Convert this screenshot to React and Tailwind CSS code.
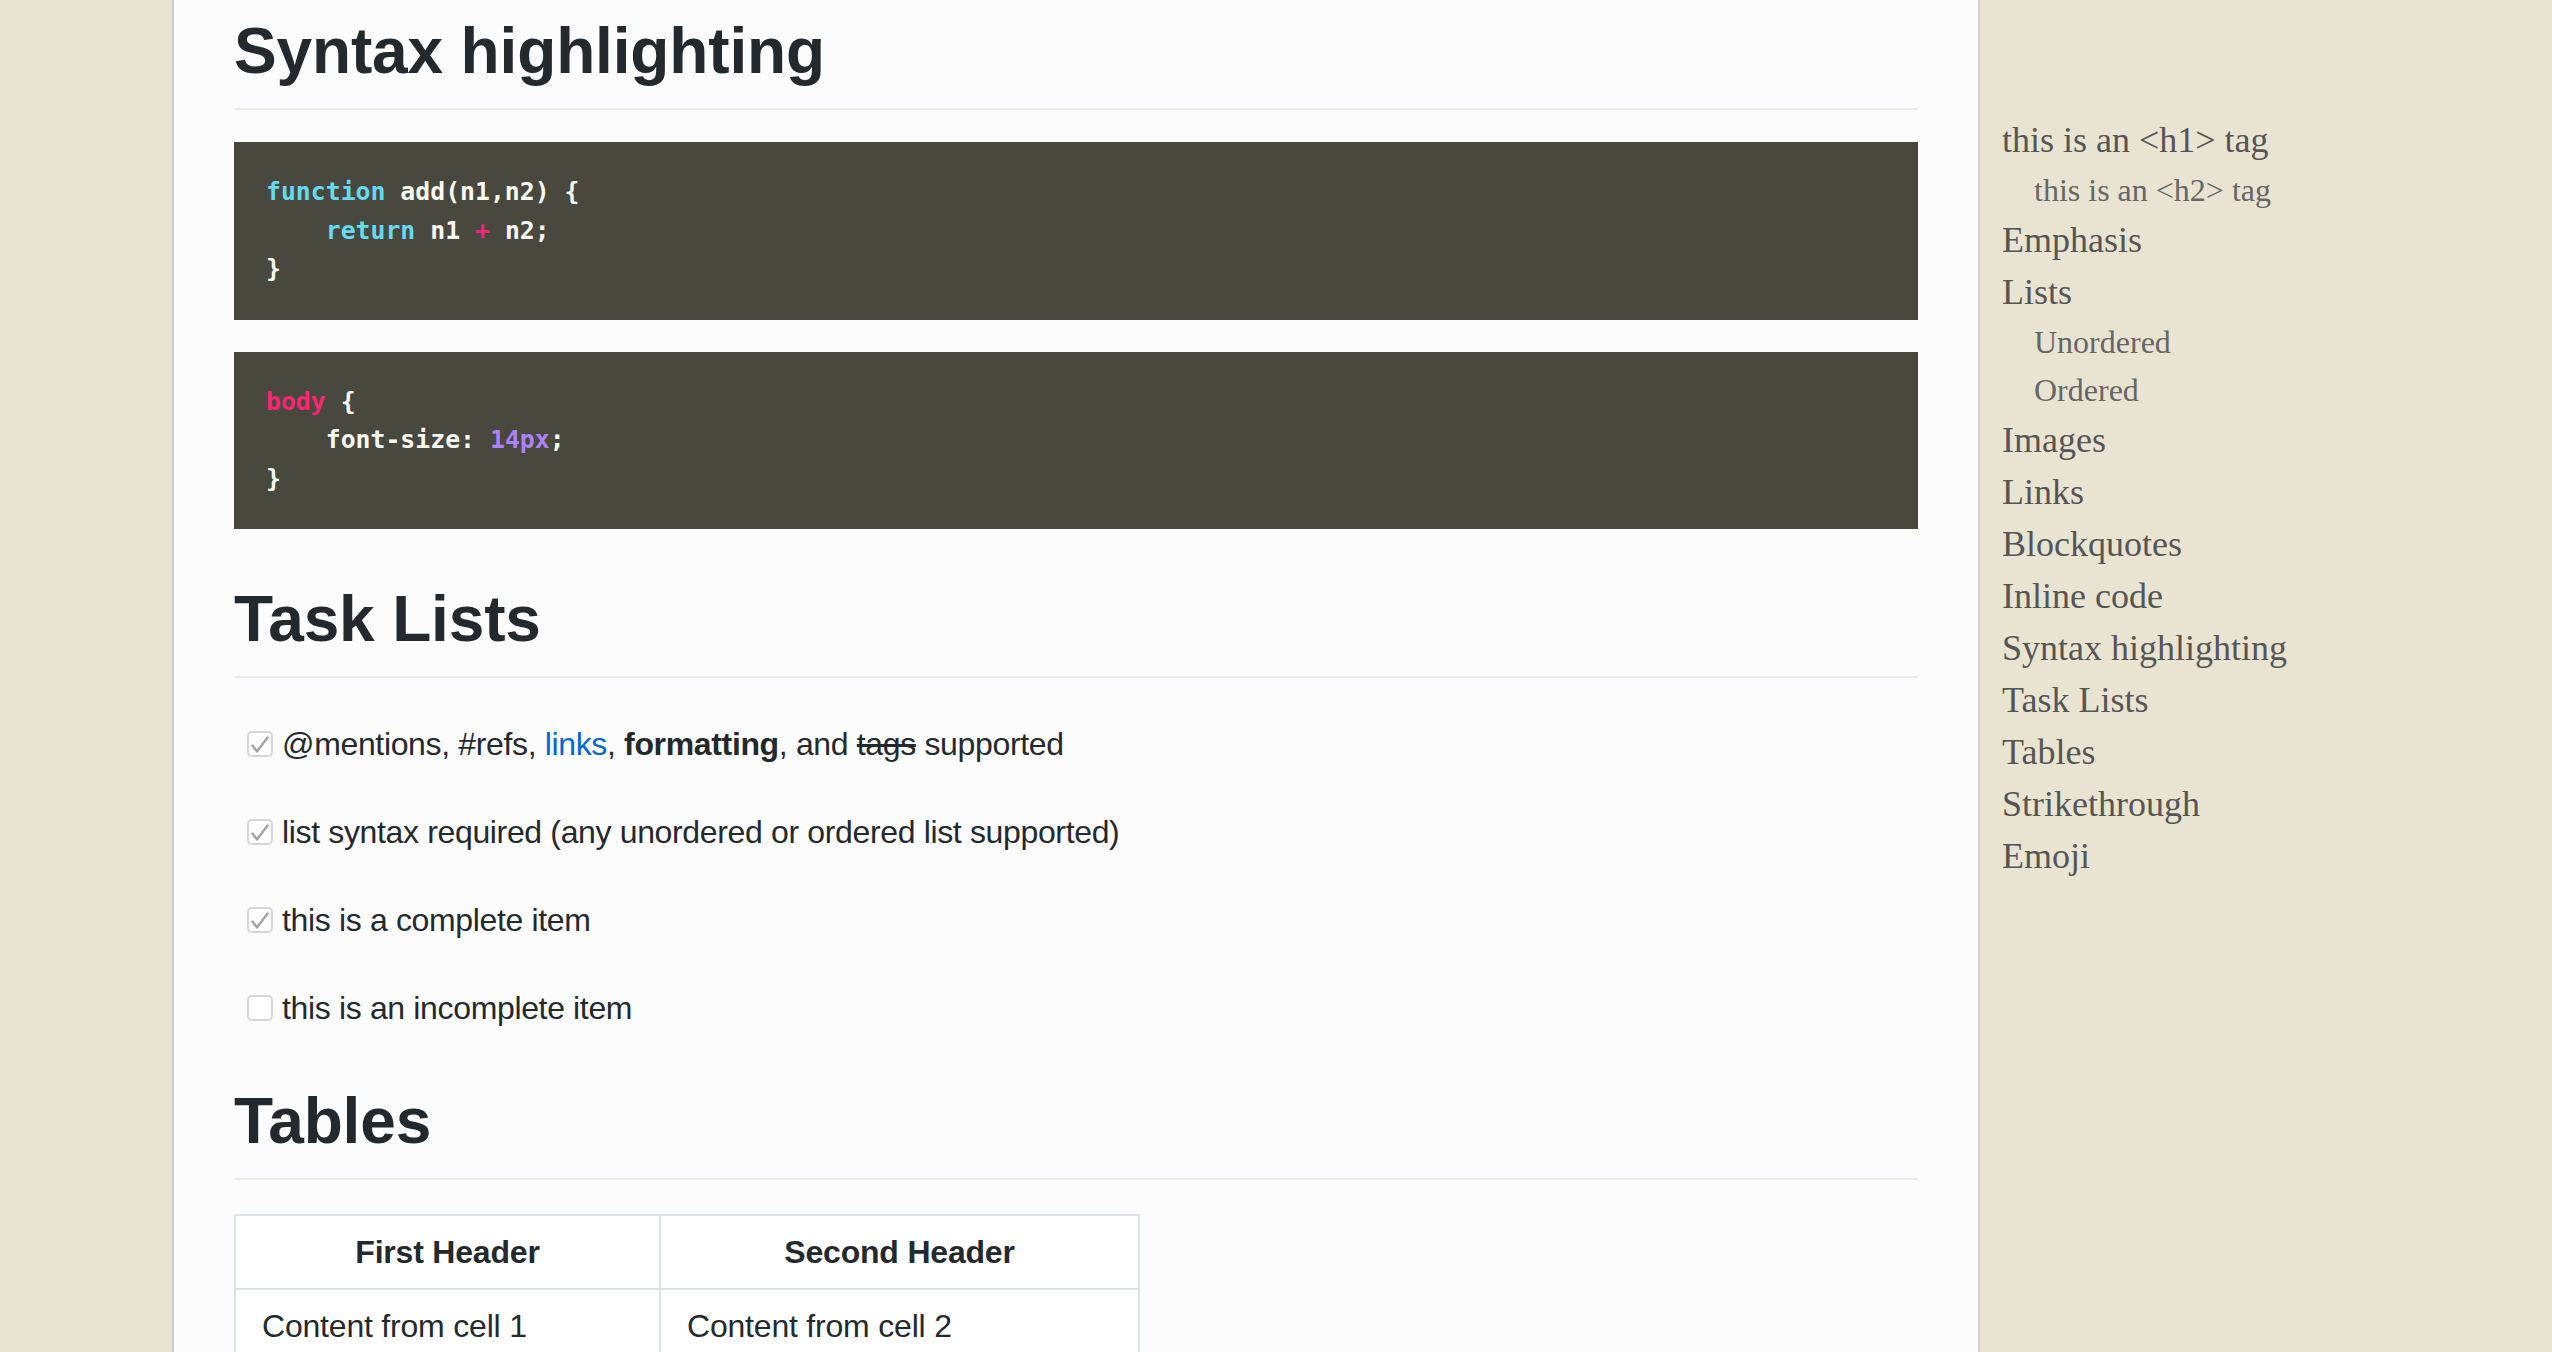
import React from "react";

const sans = { fontFamily: '"Liberation Sans", Arial, Helvetica, sans-serif' };

function Check({ checked }) {
  return (
    <span className="mr-[9px] flex h-[26px] w-[26px] shrink-0 items-center justify-center rounded-[5px] border-2 border-[#d6d6d6] bg-white">
      {checked && (
        <svg width="22" height="22" viewBox="0 0 22 22">
          <path d="M3.5 12.5 L8 18.5 L18.5 4.5" fill="none" stroke="#a3a3a3" strokeWidth="2.4" strokeLinecap="round" strokeLinejoin="round" />
        </svg>
      )}
    </span>
  );
}

function TaskItem({ checked, first, children }) {
  return (
    <li className={`ml-[13px] flex h-[48px] items-center text-[32px] leading-[48px] tracking-[-0.35px] ${first ? "" : "mt-[40px]"}`}>
      <Check checked={checked} />
      <span>{children}</span>
    </li>
  );
}

function H1({ className, children }) {
  return (
    <h1 className={`border-b-2 border-[#eaecef] pb-[17px] text-[64px] font-bold leading-[80px] tracking-[-0.15px] text-[#24292e] ${className}`}>
      {children}
    </h1>
  );
}

const toc = [
  ["this is an <h1> tag", 0],
  ["this is an <h2> tag", 1],
  ["Emphasis", 0],
  ["Lists", 0],
  ["Unordered", 1],
  ["Ordered", 1],
  ["Images", 0],
  ["Links", 0],
  ["Blockquotes", 0],
  ["Inline code", 0],
  ["Syntax highlighting", 0],
  ["Task Lists", 0],
  ["Tables", 0],
  ["Strikethrough", 0],
  ["Emoji", 0],
];

export default function App() {
  const mono = { fontFamily: '"DejaVu Sans Mono", "Liberation Mono", monospace' };
  return (
    <div className="flex h-[1352px] w-full overflow-hidden bg-[#e9e4d1]" style={sans}>
      <div className="w-[172px] shrink-0" />
      <main className="flex w-[1808px] shrink-0 flex-col border-x-2 border-l-[#c9c9cf] border-r-[#cfcfd4] bg-[#fcfcfc] px-[60px] text-[#24292e]">
        <H1 className="mt-[11px]">Syntax highlighting</H1>

        <pre className="mt-[32px] bg-[#49483e] px-[32px] py-[31px] text-[24.8px] font-bold leading-[38.5px] text-[#f8f8f2]" style={mono}>
          <div><span className="text-[#66d9ef]">function</span> add(n1,n2) {"{"}</div>
          <div>{"    "}<span className="text-[#66d9ef]">return</span> n1 <span className="text-[#f92672]">+</span> n2;</div>
          <div>{"}"}</div>
        </pre>

        <pre className="mt-[32px] bg-[#49483e] px-[32px] py-[31px] text-[24.8px] font-bold leading-[38.5px] text-[#f8f8f2]" style={mono}>
          <div><span className="text-[#f92672]">body</span> {"{"}</div>
          <div>{"    "}font-size: <span className="text-[#ae81ff]">14px</span>;</div>
          <div>{"}"}</div>
        </pre>

        <H1 className="mt-[50px]">Task Lists</H1>

        <ul className="mt-[42px]">
          <TaskItem checked first>
            @mentions, #refs, <a className="text-[#0366d6]">links</a>, <strong className="font-bold">formatting</strong>, and{" "}
            <span className="line-through">tags</span> supported
          </TaskItem>
          <TaskItem checked>list syntax required (any unordered or ordered list supported)</TaskItem>
          <TaskItem checked>this is a complete item</TaskItem>
          <TaskItem>this is an incomplete item</TaskItem>
        </ul>

        <H1 className="mt-[49px]">Tables</H1>

        <table className="mt-[34px] w-[904px] table-fixed border-collapse bg-white text-[32px] leading-[48px] tracking-[-0.2px]">
          <colgroup>
            <col className="w-[425px]" />
            <col className="w-[479px]" />
          </colgroup>
          <thead>
            <tr>
              <th className="border-2 border-[#dfe2e5] px-[26px] py-[12px] text-center font-bold">First Header</th>
              <th className="border-2 border-[#dfe2e5] px-[26px] py-[12px] text-center font-bold">Second Header</th>
            </tr>
          </thead>
          <tbody>
            <tr>
              <td className="border-2 border-[#dfe2e5] px-[26px] py-[12px]">Content from cell 1</td>
              <td className="border-2 border-[#dfe2e5] px-[26px] py-[12px]">Content from cell 2</td>
            </tr>
          </tbody>
        </table>
      </main>

      <aside className="flex flex-1 flex-col pl-[22px] pt-[114px]" style={{ fontFamily: '"Liberation Serif", "Times New Roman", serif' }}>
        {toc.map(([label, sub]) =>
          sub ? (
            <div key={label} className="h-[48px] whitespace-nowrap pl-[32px] text-[32px] leading-[48px] text-[#666]">
              {label}
            </div>
          ) : (
            <div key={label} className="h-[52px] whitespace-nowrap text-[36px] leading-[52px] text-[#555]">
              {label}
            </div>
          )
        )}
      </aside>
    </div>
  );
}
